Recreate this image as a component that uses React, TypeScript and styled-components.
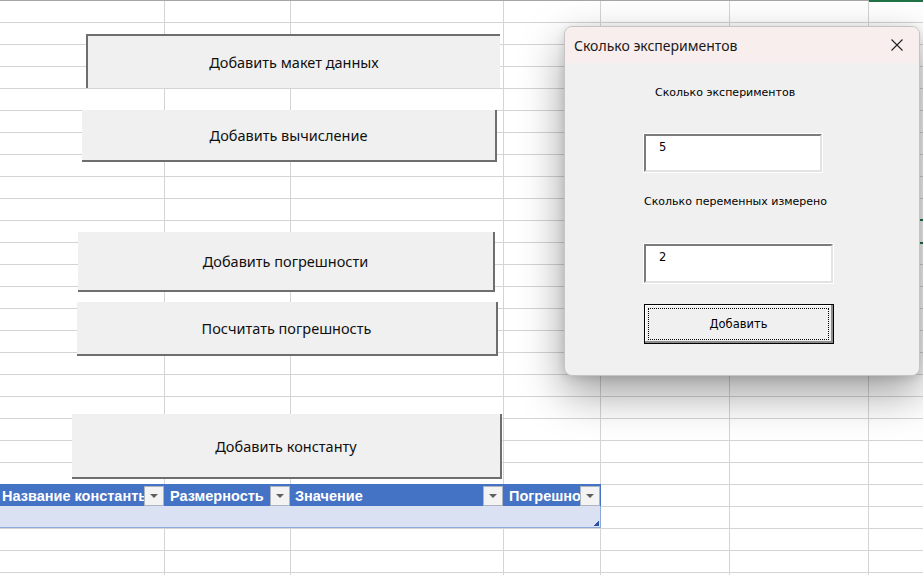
import React from 'react'
import styled, { createGlobalStyle, css } from 'styled-components'

const GlobalStyle = createGlobalStyle`
    html, body {
        margin: 0;
        padding: 0;
        background: #ffffff;
    }
    * {
        box-sizing: border-box;
    }
`

const GRID = '#d4d4d4'

const Sheet = styled.div`
    position: relative;
    width: 923px;
    height: 575px;
    overflow: hidden;
    background-color: #ffffff;
    background-image:
        linear-gradient(to bottom, #a6a6a6 0 1px, transparent 1px),
        linear-gradient(to right,
            transparent 0 164px, ${GRID} 164px 165px,
            transparent 165px 290px, ${GRID} 290px 291px,
            transparent 291px 503px, ${GRID} 503px 504px,
            transparent 504px 600px, ${GRID} 600px 601px,
            transparent 601px 729px, ${GRID} 729px 730px,
            transparent 730px 868px, ${GRID} 868px 869px,
            transparent 869px),
        repeating-linear-gradient(to bottom, transparent 0 21px, ${GRID} 21px 22px);
    background-position: 0 0, 0 0, 0 1px;
    font-family: "Noto Sans", "Open Sans", sans-serif;
`

const ColumnSelect = styled.div`
    position: absolute;
    top: 0;
    left: 869px;
    width: 60px;
    height: 2px;
    background: #217346;
`

const SelectedCell = styled.div`
    position: absolute;
    top: 219px;
    left: 868px;
    width: 80px;
    height: 25px;
    border: 2px solid #217346;
`

const ButtonStack = styled.div`
    display: flex;
    flex-direction: column;
    align-items: flex-start;
`

const SheetButton = styled.div<{ $left: number; $top: number; $w: number; $h: number; $pressed?: boolean }>`
    display: flex;
    align-items: center;
    justify-content: center;
    margin-left: ${p => p.$left}px;
    margin-top: ${p => p.$top}px;
    width: ${p => p.$w}px;
    height: ${p => p.$h}px;
    background: #f0f0f0;
    color: #111;
    font-size: 14.5px;
    ${p => p.$pressed ? css`
        border-top: 2px solid #6e6e6e;
        border-left: 2px solid #6e6e6e;
    ` : css`
        border-right: 2px solid #6e6e6e;
        border-bottom: 2px solid #6e6e6e;
    `}
`

const Table = styled.div`
    position: relative;
    margin-top: 5px;
    width: 601px;
`

const HeaderRow = styled.div`
    display: flex;
    height: 22px;
    background: #4472c4;
`

const HeaderCell = styled.div<{ $w: number; $pad: number }>`
    display: flex;
    align-items: center;
    width: ${p => p.$w}px;
    flex: none;
    padding-left: ${p => p.$pad}px;
    padding-top: 1px;
    color: #ffffff;
    font-family: "Liberation Sans", Arial, sans-serif;
    font-weight: bold;
    font-size: 14.5px;
    overflow: hidden;
`

const HeaderText = styled.span`
    flex: 1;
    white-space: nowrap;
    overflow: hidden;
`

const FilterButton = styled.div`
    flex: none;
    display: flex;
    align-items: center;
    justify-content: center;
    width: 20px;
    height: 20px;
    margin-right: 1px;
    background: #f3f3f3;
    border: 1px solid #aeb4bf;
    &::after {
        content: '';
        border-left: 4px solid transparent;
        border-right: 4px solid transparent;
        border-top: 4px solid #5f5f5f;
    }
`

const DataRow = styled.div`
    height: 22px;
    background: #d9e1f2;
    border-bottom: 1px solid #8ea9db;
    border-right: 1px solid #8ea9db;
`

const ResizeHandle = styled.div`
    position: absolute;
    right: 2px;
    bottom: 2px;
    width: 5px;
    height: 5px;
    background: linear-gradient(135deg, transparent 50%, #2f4f9f 50%);
`

const Dialog = styled.div`
    position: absolute;
    left: 564px;
    top: 26px;
    width: 356px;
    height: 350px;
    display: flex;
    flex-direction: column;
    background: #f0f0f0;
    border: 1px solid #c4c4c4;
    border-radius: 8px;
    overflow: hidden;
    box-shadow: 0 18px 44px rgba(0, 0, 0, 0.38), 0 2px 10px rgba(0, 0, 0, 0.12);
`

const TitleBar = styled.div`
    display: flex;
    align-items: center;
    justify-content: space-between;
    height: 36px;
    flex: none;
    padding: 0 16px 0 9px;
    background: #f8eeee;
    color: #1a1a1a;
    font-size: 14px;
`

const CloseIcon = () => (
    <svg width="12" height="12" viewBox="0 0 12 12">
        <path d="M0.5 0.5 L11.5 11.5 M11.5 0.5 L0.5 11.5" stroke="#222" strokeWidth="1.1" />
    </svg>
)

const DialogBody = styled.div`
    display: flex;
    flex-direction: column;
    align-items: flex-start;
    padding-left: 79px;
    font-family: "DejaVu Sans", Tahoma, sans-serif;
    font-size: 11px;
    color: #000;
`

const Label = styled.div<{ $top: number; $indent?: number }>`
    margin-top: ${p => p.$top}px;
    margin-left: ${p => p.$indent || 0}px;
    line-height: 14px;
    height: 14px;
`

const TextBox = styled.div<{ $top: number; $w: number; $h: number }>`
    margin-top: ${p => p.$top}px;
    width: ${p => p.$w}px;
    height: ${p => p.$h}px;
    padding: 4px 0 0 13px;
    background: #ffffff;
    border-top: 2px solid #7c7c7c;
    border-left: 2px solid #7c7c7c;
    border-right: 2px solid #e3e3e3;
    border-bottom: 2px solid #e3e3e3;
    outline: 1px solid #ffffff;
    outline-offset: 0;
    font-size: 11.5px;
`

const DialogButton = styled.div`
    margin-top: 21px;
    width: 190px;
    height: 40px;
    padding: 3px;
    background: #f0f0f0;
    border: 1px solid #000;
    box-shadow: inset -2px -2px 0 #8c8c8c, inset 1px 1px 0 #ffffff;
    font-size: 11.5px;
`

const FocusRect = styled.div`
    display: flex;
    align-items: center;
    justify-content: center;
    height: 100%;
    margin-right: 1px;
    border: 1px dotted #000;
`

const headers = [
    { title: 'Название константы', w: 165, pad: 2 },
    { title: 'Размерность', w: 126, pad: 5 },
    { title: 'Значение', w: 213, pad: 4 },
    { title: 'Погрешность', w: 97, pad: 5 },
]

export default function App() {
    return <>
        <GlobalStyle />
        <Sheet>
            <ColumnSelect />
            <SelectedCell />
            <ButtonStack>
                <SheetButton $left={86} $top={34} $w={414} $h={54} $pressed>Добавить макет данных</SheetButton>
                <SheetButton $left={82} $top={22} $w={415} $h={52}>Добавить вычисление</SheetButton>
                <SheetButton $left={78} $top={70} $w={417} $h={60}>Добавить погрешности</SheetButton>
                <SheetButton $left={77} $top={10} $w={421} $h={54}>Посчитать погрешность</SheetButton>
                <SheetButton $left={72} $top={58} $w={430} $h={65}>Добавить константу</SheetButton>
                <Table>
                    <HeaderRow>
                        {headers.map(h => (
                            <HeaderCell key={h.title} $w={h.w} $pad={h.pad}>
                                <HeaderText>{h.title}</HeaderText>
                                <FilterButton />
                            </HeaderCell>
                        ))}
                    </HeaderRow>
                    <DataRow />
                    <ResizeHandle />
                </Table>
            </ButtonStack>
            <Dialog>
                <TitleBar>
                    <span>Сколько экспериментов</span>
                    <CloseIcon />
                </TitleBar>
                <DialogBody>
                    <Label $top={23} $indent={11}>Сколько экспериментов</Label>
                    <TextBox $top={34} $w={178} $h={38}>5</TextBox>
                    <Label $top={23}>Сколько переменных измерено</Label>
                    <TextBox $top={35} $w={189} $h={39}>2</TextBox>
                    <DialogButton>
                        <FocusRect>Добавить</FocusRect>
                    </DialogButton>
                </DialogBody>
            </Dialog>
        </Sheet>
    </>
}
